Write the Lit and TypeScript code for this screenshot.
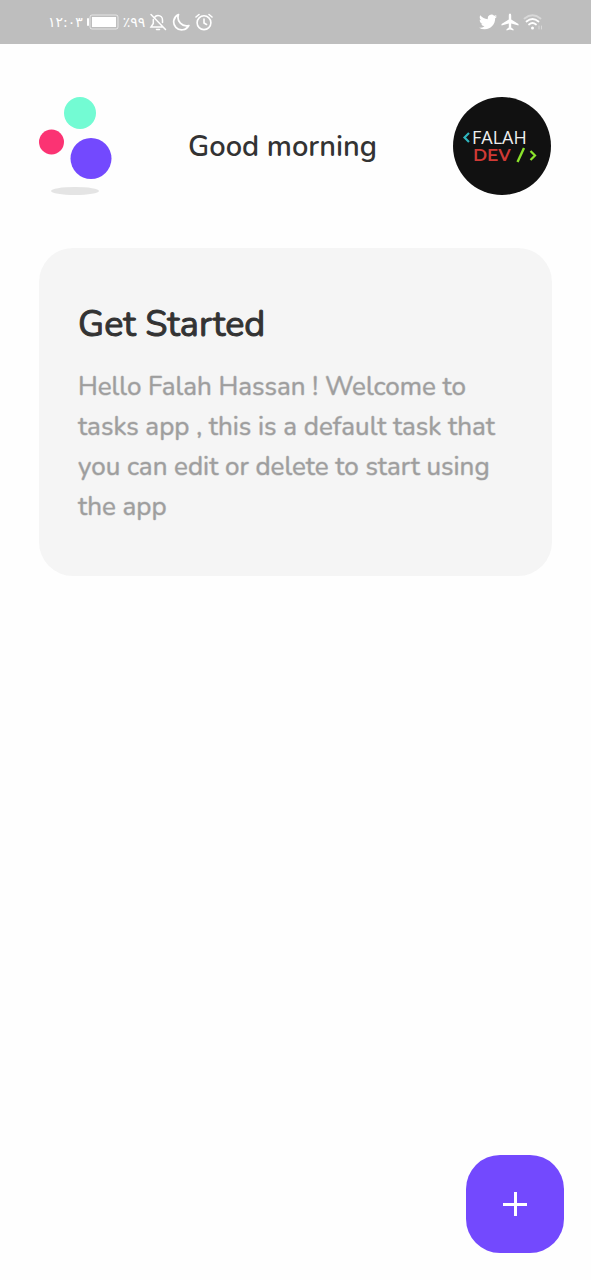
import { LitElement, html, css } from "lit";
import { customElement } from "lit/decorators.js";

@customElement("status-bar")
class StatusBar extends LitElement {
  static styles = css`
    :host {
      display: flex;
      justify-content: space-between;
      align-items: center;
      height: 44px;
      box-sizing: border-box;
      padding: 0 48px;
      background: #bebebe;
      color: #fff;
      font: 14px/20px "DejaVu Sans", sans-serif;
    }
    .group {
      display: flex;
      align-items: center;
      gap: 4px;
    }
    .icons {
      display: flex;
      gap: 5px;
    }
    svg {
      display: block;
    }
  `;

  render() {
    return html`
      <div class="group">
        <span lang="ar">١٢:٠٣</span>
        <svg width="32" height="16" viewBox="0 0 32 16" aria-label="Battery" role="img">
          <rect x="0" y="4" width="2" height="8" rx="1" fill="#fff" />
          <rect x="3" y="1" width="28" height="14" rx="2" fill="none" stroke="#fff" stroke-opacity=".6" />
          <rect x="5" y="3" width="24" height="10" fill="#fff" />
        </svg>
        <span lang="ar" dir="ltr">٪٩٩</span>
        <div class="icons">
          <svg width="18" height="18" viewBox="0 0 18 18" fill="none" stroke="#fff" stroke-width="1.5" stroke-linecap="round" aria-label="Muted" role="img">
            <path d="M5.500 4.500C6.300 3.200 7.500 2.500 9 2.500C11.700 2.500 13.500 4.500 13.500 7V9.500M4.300 6.500V10.500L2 14H13M7.500 16.500H10.500M2 1.500L16.500 16.500" />
          </svg>
          <svg width="18" height="18" viewBox="0 0 18 18" fill="none" stroke="#fff" stroke-width="1.700" stroke-linejoin="round" aria-label="Do not disturb" role="img">
            <path d="M6.500 1.500A8 8 0 1 0 16.800 12.500A8.500 8.500 0 0 1 6.500 1.500Z" />
          </svg>
          <svg width="18" height="18" viewBox="0 0 18 18" fill="none" stroke="#fff" stroke-width="1.600" stroke-linecap="round" aria-label="Alarm" role="img">
            <circle cx="9" cy="9.700" r="6.900" />
            <path d="M9 6V10L11.500 11.500M1 4L4 1.500M17 4L14 1.500" />
          </svg>
        </div>
      </div>
      <div class="group">
        <svg width="18" height="16" viewBox="0 0 24 20" fill="#fff" aria-label="Twitter" role="img">
          <path d="M23.950 2.570a10 10 0 0 1-2.820.770 4.960 4.960 0 0 0 2.160-2.720 9.900 9.900 0 0 1-3.120 1.180 4.920 4.920 0 0 0-8.380 4.480C7.690 6.090 4.070 4.130 1.640 1.160a4.820 4.820 0 0 0-.660 2.480c0 1.710.870 3.210 2.190 4.100a4.900 4.900 0 0 1-2.230-.620v.060a4.920 4.920 0 0 0 3.950 4.830 5 5 0 0 1-2.210.080 4.940 4.940 0 0 0 4.600 3.420A9.870 9.870 0 0 1 0 17.540a14 14 0 0 0 7.550 2.210c9.050 0 14-7.500 14-13.980 0-.210 0-.420-.020-.630a9.900 9.900 0 0 0 2.420-2.570Z" />
        </svg>
        <svg width="18" height="18" viewBox="0 0 18 18" fill="#fff" aria-label="Airplane mode" role="img">
          <path d="M9 .500C9.800.500 10.200 1.300 10.200 2.500V6.500L17.500 11V12.500L10.200 10.500V14.500L12.500 16.300V17.500L9 16.600L5.500 17.500V16.300L7.800 14.500V10.500L.500 12.500V11L7.800 6.500V2.500C7.800 1.300 8.200.500 9 .500Z" />
        </svg>
        <svg width="20" height="18" viewBox="0 0 20 18" fill="none" stroke="#fff" stroke-width="1.800" stroke-linecap="round" aria-label="Wi-Fi" role="img">
          <path d="M1.500 5.500Q9.500-1 17.500 5.500" stroke-opacity=".4" />
          <path d="M3.500 8.500Q9.500 3.500 15.500 8.500M6 11.500Q9.500 8.500 13 11.500" />
          <circle cx="9.500" cy="15" r="1.500" fill="#fff" stroke="none" />
          <path d="M16 13V16M18.500 13V16" stroke-width="1" stroke-opacity=".4" />
        </svg>
      </div>
    `;
  }
}

@customElement("task-card")
class TaskCard extends LitElement {
  static properties = { heading: {}, text: {} };
  declare heading: string;
  declare text: string;

  static styles = css`
    :host {
      display: block;
      padding: 53px 39px 49px;
      border-radius: 34px;
      background: #f5f5f5;
    }
    h2 {
      margin: 0 0 18px;
      color: #333;
      font-size: 36px;
      line-height: 48px;
      font-weight: 400;
      -webkit-text-stroke: 1px #333;
    }
    p {
      margin: 0;
      color: #9e9e9e;
      font-size: 26px;
      line-height: 40px;
      font-weight: 400;
      -webkit-text-stroke: 1px #9e9e9e80;
    }
  `;

  render() {
    return html`
      <h2>${this.heading}</h2>
      <p>${this.text}</p>
    `;
  }
}

@customElement("app-root")
class AppRoot extends LitElement {
  static styles = css`
    :host {
      display: block;
      min-height: 100vh;
      background: #fefefe;
      font-family: Nunito, Lato, sans-serif;
    }
    header {
      display: flex;
      justify-content: space-between;
      align-items: center;
      padding: 53px 40px 53px 39px;
    }
    svg {
      display: block;
    }
    h1 {
      margin: 0;
      color: #333;
      font-size: 29px;
      line-height: 41px;
      font-weight: 600;
    }
    main {
      padding: 0 39px;
    }
    .add {
      position: fixed;
      right: 27px;
      bottom: 27px;
      width: 98px;
      height: 98px;
      display: grid;
      place-items: center;
      padding: 0;
      border: 0;
      border-radius: 34px;
      background: #7349fe;
      cursor: pointer;
    }
    .tag {
      font-family: "Open Sans", sans-serif;
      font-size: 18px;
    }
    .dev {
      font-family: Montserrat, "DejaVu Sans", sans-serif;
      font-size: 17px;
      font-weight: 600;
    }
  `;

  render() {
    return html`
      <status-bar></status-bar>
      <header>
        <svg width="73" height="98" viewBox="0 0 73 98" role="img" aria-label="Tasks logo">
          <circle cx="41" cy="16" r="16" fill="#73fbd3" />
          <circle cx="12.500" cy="45" r="12.500" fill="#fb3373" />
          <circle cx="52" cy="61.500" r="20.500" fill="#7349fe" />
          <ellipse cx="36" cy="94" rx="24" ry="4" fill="#e4e4e4" />
        </svg>
        <h1>Good morning</h1>
        <svg width="98" height="98" viewBox="0 0 98 98" role="img" aria-label="Falah Dev">
          <circle cx="49" cy="49" r="49" fill="#111" />
          <path d="M16 36L11.500 40.500L16 45" fill="none" stroke="#2fb5bd" stroke-width="2.200" />
          <text>
            <tspan class="tag" x="19" y="47" fill="#eee">FALAH</tspan>
            <tspan class="dev" x="20" y="64" fill="#d03a35">DEV</tspan>
          </text>
          <path d="M64.500 65L71 51" stroke="#8be32c" stroke-width="2.400" />
          <path d="M77.500 54L82 58.500L77.500 63" fill="none" stroke="#8be32c" stroke-width="2.200" />
        </svg>
      </header>
      <main>
        <task-card
          heading="Get Started"
          text="Hello Falah Hassan ! Welcome to tasks app , this is a default task that you can edit or delete to start using the app"
        ></task-card>
      </main>
      <button class="add" type="button" aria-label="Add task">
        <svg width="24" height="24" viewBox="0 0 24 24" stroke="#fff" stroke-width="3">
          <path d="M12.500 0V24M0 12.500H24" />
        </svg>
      </button>
    `;
  }
}
